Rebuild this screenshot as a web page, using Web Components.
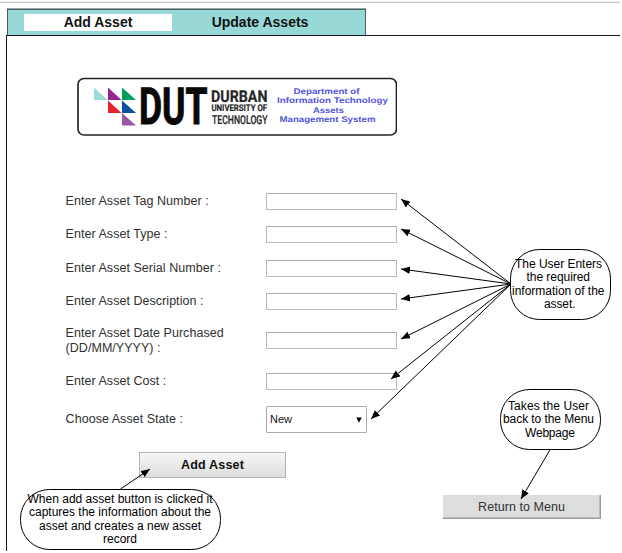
<!DOCTYPE html>
<html lang="en"><head><meta charset="utf-8"><title>Add Asset</title>
<style>html,body{margin:0;background:#fff;font-family:"Liberation Sans",Arial,sans-serif;overflow:hidden}</style></head>
<body><asset-page></asset-page>
<script>
const define=(name,html,setup)=>customElements.define(name,class extends HTMLElement{
  constructor(){super();this.attachShadow({mode:'open'}).innerHTML=html;}
  connectedCallback(){if(setup)setup(this,this.shadowRoot);}
});

define('tab-item',`<style>
:host{display:block;width:148px;height:17px;font:bold 14px/17px "Liberation Sans",Arial,sans-serif;text-align:center;color:#101414;white-space:nowrap}
:host([active]){background:#fff}
</style><slot></slot>`);

define('tab-bar',`<style>
:host{display:flex;box-sizing:border-box;width:359px;height:26px;margin-left:7px;padding:4px 0 0 16px;gap:14px;background:#98d8d6;border:solid #465f5e;border-width:1px 1px 0;box-shadow:0 -1px #9aa9a8}
</style><slot></slot>`);

define('dut-logo',`<style>
:host{display:block;width:320px;height:59px}svg{display:block}
</style><svg width="320" height="59" viewBox="77 77 320 59" text-rendering="geometricPrecision">
<rect x="78" y="78.5" width="318.5" height="56.5" rx="6" fill="#fff" stroke="#252525" stroke-width="1.7"/>
<path d="M94 87.5V100H107.500z" fill="#9bd9da"/><path d="M108 87.500V100H121.500z" fill="#93278f"/><path d="M122 87.500V100H136z" fill="#00a05a"/>
<path d="M108 100.500V113H121.500z" fill="#e6212d"/><path d="M122 100.500V113H136z" fill="#0c50a4"/><path d="M122 113V125.500H136z" fill="#9a58a4"/>
<g font-family="Roboto,Liberation Sans,Arial,sans-serif" font-weight="bold" fill="#080808">
<text x="139" y="124.300" font-size="51" textLength="68.500" lengthAdjust="spacingAndGlyphs" stroke="#080808" stroke-width="1">DUT</text>
<g fill="#262626" stroke="#262626" stroke-width=".2"><text x="211" y="101.500" font-size="16.500" textLength="56.500" lengthAdjust="spacingAndGlyphs">DURBAN</text>
<text x="211.500" y="111.300" font-size="9.200" textLength="55.500" lengthAdjust="spacingAndGlyphs">UNIVERSITY OF</text>
<text x="212" y="124.300" font-size="12.200" font-weight="500" textLength="55.500" lengthAdjust="spacingAndGlyphs">TECHNOLOGY</text></g>
<g fill="#5353dc" font-family="Liberation Sans,Arial,sans-serif" font-size="8.200"><text x="293.500" y="94" textLength="66" lengthAdjust="spacingAndGlyphs">Department of</text>
<text x="277" y="103.400" textLength="111" lengthAdjust="spacingAndGlyphs">Information Technology</text>
<text x="313" y="112.700" textLength="31" lengthAdjust="spacingAndGlyphs">Assets</text>
<text x="279.500" y="122" textLength="96" lengthAdjust="spacingAndGlyphs">Management System</text></g></g></svg>`);

define('form-row',`<style>
:host{display:grid;grid-template-columns:201px auto;align-items:center;justify-items:start;font-size:12.5px;line-height:15px;color:#303030;letter-spacing:.04px}
</style><span><slot></slot></span><slot name="field"></slot>`);

define('text-field',`<style>
:host{display:block;width:131px;height:17px}
input{display:block;box-sizing:border-box;width:100%;height:100%;margin:0;padding:0 3px;border:1px solid #bbb;border-top-color:#aaa;background:#fff;outline:0}
</style><input type="text">`);

define('state-select',`<style>
:host{display:flex;box-sizing:border-box;width:101px;height:27px;padding:0 4px 0 3px;align-items:center;justify-content:space-between;border:1px solid #aaa;border-radius:1px;background:#fff;font-size:11px;color:#111;letter-spacing:0}
svg{display:block}
</style><slot></slot><svg width="6" height="6"><path d="M.3 .5H5.700L3 5.800z" fill="#000"/></svg>`);

define('push-button',`<style>
:host{display:block}
button{display:block;box-sizing:border-box;width:147px;height:26px;margin:0;padding:0;border:1px solid #b4b4b4;background:linear-gradient(#f6f6f6,#ddd);font:bold 12.5px "Liberation Sans",Arial,sans-serif;letter-spacing:.2px;color:#101010}
:host([flat]) button{width:158px;height:24px;border-width:0 1px 1px 0;border-color:#999;background:#ddd;font-weight:normal;color:#333;letter-spacing:.05px;box-shadow:inset -1px -1px #bbb}
</style><button><slot></slot></button>`);

define('asset-form',`<style>
:host{display:block}
.rows{display:grid;grid-template-rows:33px 33px 34px 33px 45px 36px 41px;margin:49px 0 0 58.6px}
form-row>[slot]{margin-left:-.6px}
dut-logo{margin-left:70px}
.add{margin:12px 0 0 132px}.back{margin:17px 0 0 436px}
</style><dut-logo></dut-logo><div class="rows">
<form-row>Enter Asset Tag Number :<text-field slot="field"></text-field></form-row>
<form-row>Enter Asset Type :<text-field slot="field"></text-field></form-row>
<form-row>Enter Asset Serial Number :<text-field slot="field"></text-field></form-row>
<form-row>Enter Asset Description :<text-field slot="field"></text-field></form-row>
<form-row>Enter Asset Date Purchased<br>(DD/MM/YYYY) :<text-field slot="field"></text-field></form-row>
<form-row>Enter Asset Cost :<text-field slot="field"></text-field></form-row>
<form-row>Choose Asset State :<state-select slot="field">New</state-select></form-row>
</div><push-button class="add">Add Asset</push-button><push-button class="back" flat>Return to Menu</push-button>`);

define('callout-layer',`<style>
:host{position:absolute;inset:0;pointer-events:none}svg{display:block}
text{font:12px "Liberation Sans",Arial,sans-serif;fill:#000}
</style><svg width="620" height="551"><defs><marker id="head" markerUnits="userSpaceOnUse" markerWidth="10" markerHeight="8" refX="9" refY="3.700" orient="auto"><path d="M0 0L9 3.700L0 7.400z"/></marker></defs>
<g fill="none" stroke="#000" stroke-width="1"></g><g class="words"></g></svg>`,(el,root)=>{
  const arrows=[[511,284,401,199],[511,284,401,229],[511,284,401,269],[511,284,401,299],[511,284,401,339],[511,284,391,379],[511,284,371,419],[550.5,449,521,499],[120.500,489,150,469]];
  const bubbles=[[510.500,249.500,100,70],[500.500,389.500,100,60],[20.500,489.500,200,60]];
  const words=[['The User Enters',515,268,87],['the required',526.500,281,63.500],['information of the',512,294.500,92.500],['asset.',544,308,31.500],
    ['Takes the User',508,410,81],['back to the Menu',503,423,91],['Webpage',525,436.500,50],
    ['When add asset button is clicked it',27.500,502.500,185],['captures the information about the',29,516,182],['asset and creates a new asset',39,529.500,162],['record',103,543,34]];
  root.querySelector('g').innerHTML=bubbles.map(([x,y,w,h])=>`<rect x="${x}" y="${y}" width="${w}" height="${h}" rx="29"/>`).join('')
    +arrows.map(([a,b,c,d])=>`<path d="M${a} ${b}L${c} ${d}" marker-end="url(#head)"/>`).join('');
  root.querySelectorAll('marker path').forEach(p=>{p.setAttribute('fill','#000');p.setAttribute('stroke','none')});
  root.querySelector('.words').innerHTML=words.map(([t,x,y,w])=>`<text x="${x}" y="${y}" textLength="${w}">${t}</text>`).join('');
});

define('asset-page',`<style>
:host{display:block;position:relative;width:620px;height:551px;overflow:hidden;background:#fff}
header{box-sizing:border-box;height:9px;background:linear-gradient(#fff 1px,#ececec 1px,#ececec 2px,#ccc 2px,#ccc 3px,#fff 3px)}
main{box-sizing:border-box;height:516px;margin-left:6px;padding-top:41px;border:solid #15191b;border-width:1px 0 0 1px}
</style><header></header><tab-bar><tab-item active>Add Asset</tab-item><tab-item>Update Assets</tab-item></tab-bar>
<main><asset-form></asset-form></main><callout-layer></callout-layer>`);
</script></body></html>
